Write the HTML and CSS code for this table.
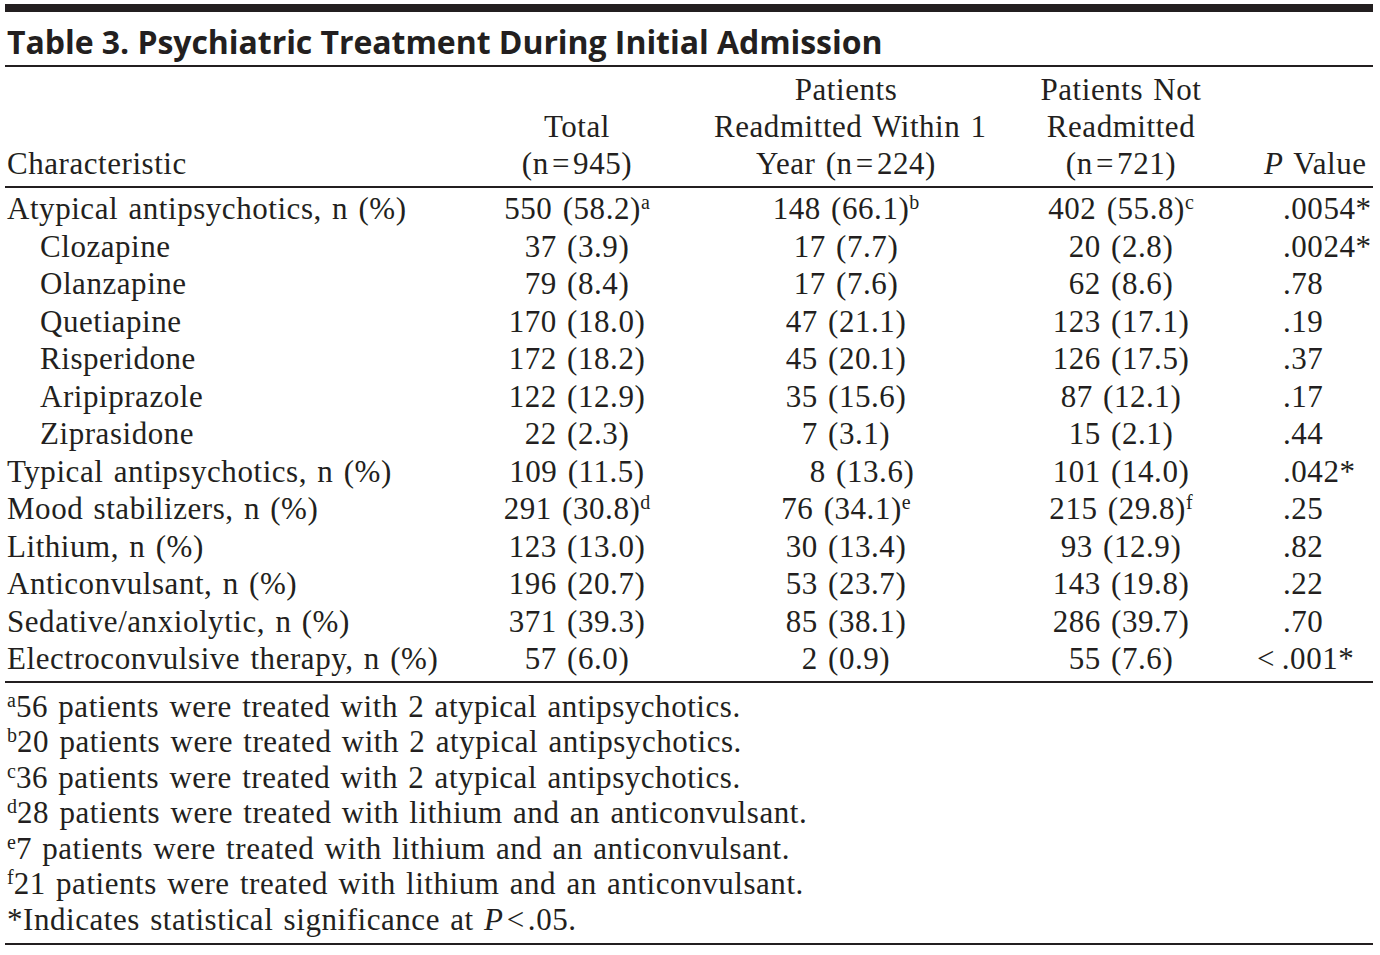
FILE: index.html
```html
<!DOCTYPE html>
<html lang="en">
<head>
<meta charset="utf-8">
<title>Table 3. Psychiatric Treatment During Initial Admission</title>
<link rel="stylesheet" href="styles.css">
</head>
<body>
<div class="sheet">
  <div class="top-rule"></div>
  <h1 class="title">Table 3. Psychiatric Treatment During Initial Admission</h1>
  <table class="data">
    <colgroup>
      <col class="c1"><col class="c2"><col class="c3"><col class="c4"><col class="c5">
    </colgroup>
    <thead>
      <tr>
        <th class="lab">Characteristic</th>
        <th>Total<br>(n&#8202;=&#8202;945)</th>
        <th>Patients<br>Readmitted Within 1<br>Year (n&#8202;=&#8202;224)</th>
        <th>Patients Not<br>Readmitted<br>(n&#8202;=&#8202;721)</th>
        <th class="pv"><i>P</i> Value</th>
      </tr>
    </thead>
    <tbody>
      <tr class="first"><td class="lab">Atypical antipsychotics, n (%)</td><td>550 (58.2)<sup>a</sup></td><td>148 (66.1)<sup>b</sup></td><td>402 (55.8)<sup>c</sup></td><td class="pv">.0054*</td></tr>
      <tr><td class="lab sub">Clozapine</td><td>37 (3.9)</td><td>17 (7.7)</td><td>20 (2.8)</td><td class="pv">.0024*</td></tr>
      <tr><td class="lab sub">Olanzapine</td><td>79 (8.4)</td><td>17 (7.6)</td><td>62 (8.6)</td><td class="pv">.78</td></tr>
      <tr><td class="lab sub">Quetiapine</td><td>170 (18.0)</td><td>47 (21.1)</td><td>123 (17.1)</td><td class="pv">.19</td></tr>
      <tr><td class="lab sub">Risperidone</td><td>172 (18.2)</td><td>45 (20.1)</td><td>126 (17.5)</td><td class="pv">.37</td></tr>
      <tr><td class="lab sub">Aripiprazole</td><td>122 (12.9)</td><td>35 (15.6)</td><td>87 (12.1)</td><td class="pv">.17</td></tr>
      <tr><td class="lab sub">Ziprasidone</td><td>22 (2.3)</td><td>7 (3.1)</td><td>15 (2.1)</td><td class="pv">.44</td></tr>
      <tr><td class="lab">Typical antipsychotics, n (%)</td><td>109 (11.5)</td><td>&#8199;&#8199;8 (13.6)</td><td>101 (14.0)</td><td class="pv">.042*</td></tr>
      <tr><td class="lab">Mood stabilizers, n (%)</td><td>291 (30.8)<sup>d</sup></td><td>76 (34.1)<sup>e</sup></td><td>215 (29.8)<sup>f</sup></td><td class="pv">.25</td></tr>
      <tr><td class="lab">Lithium, n (%)</td><td>123 (13.0)</td><td>30 (13.4)</td><td>93 (12.9)</td><td class="pv">.82</td></tr>
      <tr><td class="lab">Anticonvulsant, n (%)</td><td>196 (20.7)</td><td>53 (23.7)</td><td>143 (19.8)</td><td class="pv">.22</td></tr>
      <tr><td class="lab">Sedative/anxiolytic, n (%)</td><td>371 (39.3)</td><td>85 (38.1)</td><td>286 (39.7)</td><td class="pv">.70</td></tr>
      <tr class="last"><td class="lab">Electroconvulsive therapy, n (%)</td><td>57 (6.0)</td><td>2 (0.9)</td><td>55 (7.6)</td><td class="pv"><span class="lt">&lt;&#8201;</span>.001*</td></tr>
    </tbody>
  </table>
  <div class="notes">
    <p><sup>a</sup>56 patients were treated with 2 atypical antipsychotics.</p>
    <p><sup>b</sup>20 patients were treated with 2 atypical antipsychotics.</p>
    <p><sup>c</sup>36 patients were treated with 2 atypical antipsychotics.</p>
    <p><sup>d</sup>28 patients were treated with lithium and an anticonvulsant.</p>
    <p><sup>e</sup>7 patients were treated with lithium and an anticonvulsant.</p>
    <p><sup>f</sup>21 patients were treated with lithium and an anticonvulsant.</p>
    <p>*Indicates statistical significance at <i>P</i>&#8202;&lt;&#8202;.05.</p>
  </div>
</div>
</body>
</html>
```
FILE: styles.css
```css
html, body {
  margin: 0;
  padding: 0;
  background: #ffffff;
}
body {
  color: #231f20;
  font-family: "Liberation Serif", "Times New Roman", serif;
  font-size: 31px;
  letter-spacing: 0.55px;
  word-spacing: 2px;
}
.sheet {
  width: 1368px;
  margin: 4px 0 0 5px;
}
.top-rule {
  height: 8px;
  background: #231f20;
}
.title {
  margin: 0;
  box-sizing: border-box;
  height: 55px;
  padding: 11px 0 0 2px;
  font-family: "Open Sans", "Noto Sans", sans-serif;
  font-weight: 700;
  font-size: 32px;
  line-height: 37px;
  letter-spacing: -0.05px;
  word-spacing: 0;
  white-space: nowrap;
  border-bottom: 2px solid #231f20;
}
.data {
  width: 1368px;
  border-collapse: collapse;
  table-layout: fixed;
}
.c1 { width: 435px; }
.c2 { width: 274px; }
.c3 { width: 264px; }
.c4 { width: 286px; }
.c5 { width: 109px; }
.data th {
  font-weight: 400;
  text-align: center;
  vertical-align: bottom;
  line-height: 37px;
  padding: 4px 0 4px 0;
  white-space: nowrap;
  border-bottom: 2px solid #231f20;
}
.data td {
  text-align: center;
  line-height: 37.5px;
  padding: 0;
  white-space: nowrap;
}
.data .lab {
  text-align: left;
  padding-left: 2px;
}
.data .sub {
  padding-left: 35px;
}
.data th.pv {
  text-align: right;
  padding-right: 8px;
}
.data td.pv {
  text-align: left;
  padding-left: 19px;
}
.data tr.first td {
  padding-top: 2px;
}
.data tr.last td {
  padding-bottom: 3px;
  border-bottom: 2px solid #231f20;
}
.lt {
  display: inline-block;
  margin-left: -26px;
}
sup {
  font-size: 20px;
  line-height: 0;
  letter-spacing: 0;
  vertical-align: 10px;
}
.notes {
  padding: 6px 0 6px 2px;
  border-bottom: 2px solid #231f20;
}
.notes p {
  margin: 0;
  line-height: 35.5px;
  white-space: nowrap;
}
```
